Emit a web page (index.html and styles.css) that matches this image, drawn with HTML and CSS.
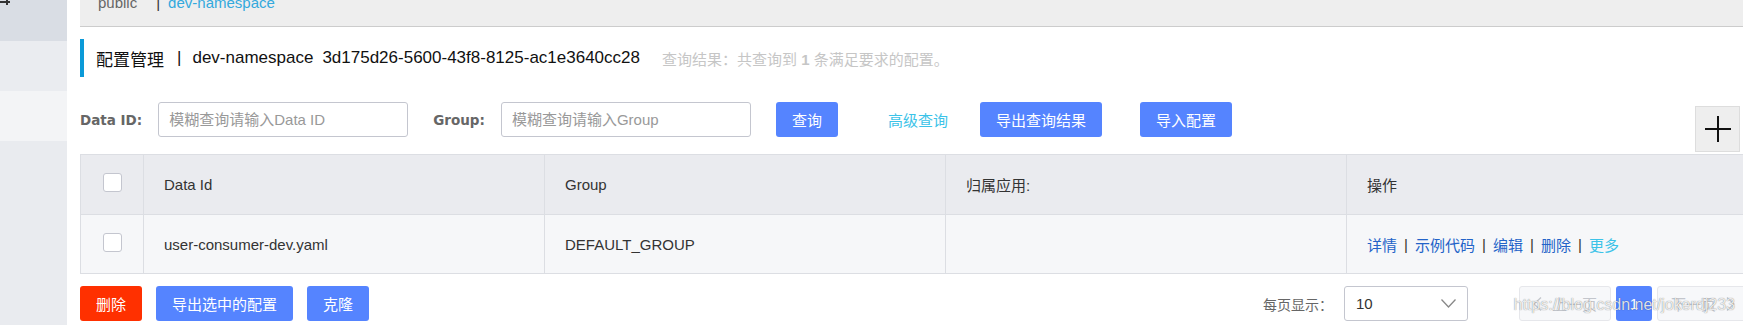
FILE: index.html
```html
<!DOCTYPE html>
<html lang="zh-CN">
<head>
  <meta charset="UTF-8">
  <title>配置管理</title>
  <link rel="stylesheet" href="styles.css">
</head>
<body>
  <!-- 左侧菜单 -->
  <aside class="sidebar">
    <div class="side-top">
      <svg class="side-icon" width="12" height="6" viewBox="0 0 12 6"><path d="M0 2H10M7 0V5" stroke="#333" stroke-width="2" fill="none"/></svg>
    </div>
    <div class="side-item"></div>
    <div class="side-item side-active"></div>
  </aside>

  <main class="main">
    <!-- 命名空间 -->
    <div class="tabs">
      <span class="tab">public</span>
      <span class="tab-sep">|</span>
      <span class="tab tab-active">dev-namespace</span>
    </div>

    <div class="page-title">
      <span>配置管理</span>
      <span class="title-sep">|</span>
      <span>dev-namespace</span>
      <span class="title-id">3d175d26-5600-43f8-8125-ac1e3640cc28</span>
      <span class="title-result">查询结果：共查询到 <b>1</b> 条满足要求的配置。</span>
    </div>

    <!-- 查询条件 -->
    <div class="search-bar">
      <label class="field-label">Data ID:</label>
      <input class="field-input" type="text" placeholder="模糊查询请输入Data ID">
      <label class="field-label field-group">Group:</label>
      <input class="field-input" type="text" placeholder="模糊查询请输入Group">
      <button class="btn btn-query">查询</button>
      <a class="link-advanced">高级查询</a>
      <button class="btn btn-export">导出查询结果</button>
      <button class="btn btn-import">导入配置</button>
      <div class="add-btn">
        <svg width="26" height="26" viewBox="0 0 26 26"><path d="M0 13H26M13 0V26" stroke="#111" stroke-width="2" fill="none"/></svg>
      </div>
    </div>

    <!-- 配置列表 -->
    <div class="config-table">
      <div class="table-row table-head">
        <div class="table-cell check-cell"><span class="checkbox"></span></div>
        <div class="table-cell">Data Id</div>
        <div class="table-cell">Group</div>
        <div class="table-cell">归属应用:</div>
        <div class="table-cell">操作</div>
      </div>
      <div class="table-row table-body">
        <div class="table-cell check-cell"><span class="checkbox"></span></div>
        <div class="table-cell">user-consumer-dev.yaml</div>
        <div class="table-cell">DEFAULT_GROUP</div>
        <div class="table-cell"></div>
        <div class="table-cell actions">
          <a>详情</a><span class="link-sep">|</span><a>示例代码</a><span class="link-sep">|</span><a>编辑</a><span class="link-sep">|</span><a>删除</a><span class="link-sep">|</span><a class="link-more">更多</a>
        </div>
      </div>
    </div>

    <!-- 批量操作与分页 -->
    <div class="footer-bar">
      <button class="btn btn-danger">删除</button>
      <button class="btn">导出选中的配置</button>
      <button class="btn">克隆</button>

      <div class="pager">
        <span class="pager-label">每页显示：</span>
        <div class="page-size">
          <span>10</span>
          <svg width="15" height="9" viewBox="0 0 15 9"><path d="M0.5 0.5L7.5 8L14.5 0.5" stroke="#888" stroke-width="1.3" fill="none"/></svg>
        </div>
        <div class="page-btn page-prev">
          <svg width="9" height="14" viewBox="0 0 9 14"><path d="M8 0.5L1 7L8 13.5" stroke="#c3c6cc" stroke-width="1.3" fill="none"/></svg>
          <span>上一页</span>
        </div>
        <div class="page-num">1</div>
        <div class="page-btn page-next">
          <span>下一页</span>
          <svg width="9" height="14" viewBox="0 0 9 14"><path d="M1 0.5L8 7L1 13.5" stroke="#c3c6cc" stroke-width="1.3" fill="none"/></svg>
        </div>
      </div>
    </div>
  </main>

  <div class="watermark">https://blog.csdn.net/jokerdj233</div>
</body>
</html>
```

FILE: styles.css
```css
/* 全局样式 */
html, body {
  margin: 0;
  padding: 0;
  overflow: hidden;
}
body {
  display: flex;
  height: 325px;
  font-family: "Liberation Sans", "Noto Sans CJK SC", sans-serif;
  font-size: 15px;
  color: #333;
  background-color: #fff;
}

/* 左侧菜单 */
.sidebar {
  width: 67px;
  flex-shrink: 0;
  background-color: #e9ebef;
}
.side-top {
  height: 41px;
  background-color: #d9dde4;
}
.side-icon {
  display: block;
}
.side-item {
  height: 50px;
  background-color: #eaecf0;
}
.side-active {
  background-color: #f3f4f6;
}

/* 主要内容区域 */
.main {
  width: 1669px;
  flex-shrink: 0;
  margin-left: 13px;
}
.tabs {
  display: flex;
  height: 26px;
  padding-left: 18px;
  background-color: #eee;
  border-bottom: 1px solid #ccc;
}
.tabs span {
  margin-top: -7px;
  line-height: 20px;
}
.tab {
  color: #666;
}
.tab-sep {
  margin-left: 19px;
  color: #333;
}
.tab-active {
  margin-left: 8px;
  color: #33a9dd;
}

.page-title {
  display: flex;
  align-items: center;
  height: 38px;
  margin-top: 12px;
  padding-left: 12px;
  border-left: 4px solid #0b9ad8;
  font-size: 17px;
  color: #111;
}
.title-sep {
  margin: 0 11px 0 13px;
}
.title-id {
  margin-left: 9px;
}
.title-result {
  margin-left: 22px;
  font-size: 15px;
  color: #c6c6c6;
}

/* 查询条件 */
.search-bar {
  display: flex;
  align-items: center;
  height: 35px;
  margin-top: 25px;
}
.field-label {
  margin-right: 16px;
  font-family: "DejaVu Sans", sans-serif;
  font-size: 13.5px;
  font-weight: bold;
  color: #666;
}
.field-group {
  margin-left: 25px;
}
.field-input {
  width: 250px;
  height: 35px;
  box-sizing: border-box;
  padding: 0 10px;
  border: 1px solid #c4c6cf;
  border-radius: 3px;
  font: inherit;
  color: #333;
  outline: none;
}
.field-input::placeholder {
  color: #999;
}
.btn {
  height: 35px;
  padding: 0 16px;
  border: 0;
  border-radius: 3px;
  background-color: #5584ff;
  color: #fff;
  font: inherit;
}
.btn-query {
  margin-left: 25px;
}
.link-advanced {
  margin-left: 50px;
  color: #3cc3e8;
}
.btn-export {
  margin-left: 32px;
}
.btn-import {
  margin-left: 38px;
}
.add-btn {
  display: flex;
  align-items: center;
  justify-content: center;
  align-self: flex-start;
  width: 45px;
  height: 46px;
  box-sizing: border-box;
  margin: 4px 9px 0 auto;
  background-color: #eee;
  border: 1px solid #ddd;
}

/* 配置列表 */
.config-table {
  margin-top: 17px;
  border-top: 1px solid #dcdee3;
  border-left: 1px solid #dcdee3;
}
.table-row {
  display: grid;
  grid-template-columns: 63px 401px 401px 401px 1fr;
}
.table-cell {
  display: flex;
  align-items: center;
  padding: 0 20px;
  border-right: 1px solid #dcdee3;
  border-bottom: 1px solid #dcdee3;
}
.table-head .table-cell {
  height: 59px;
  background-color: #eaebef;
}
.table-body .table-cell {
  height: 58px;
  background-color: #f6f7f9;
}
.check-cell {
  justify-content: center;
  padding: 0;
}
.checkbox {
  width: 19px;
  height: 19px;
  box-sizing: border-box;
  margin-top: -4px;
  border: 1px solid #c4c6cf;
  border-radius: 3px;
  background-color: #fff;
}
.actions a {
  color: #2363c8;
}
.actions .link-more {
  color: #3cc3e8;
}
.link-sep {
  width: 18px;
  text-align: center;
  color: #333;
}

/* 批量操作与分页 */
.footer-bar {
  display: flex;
  align-items: center;
  height: 35px;
  margin-top: 12px;
}
.footer-bar .btn + .btn {
  margin-left: 14px;
}
.btn-danger {
  background-color: #ff3000;
}
.pager {
  display: flex;
  align-items: center;
  margin-left: auto;
}
.pager-label {
  margin-right: 11px;
  font-size: 14px;
  color: #666;
}
.page-size {
  display: flex;
  align-items: center;
  justify-content: space-between;
  width: 124px;
  height: 35px;
  box-sizing: border-box;
  padding: 0 11px;
  border: 1px solid #c4c6cf;
  border-radius: 3px;
  color: #333;
}
.page-btn {
  display: flex;
  align-items: center;
  justify-content: center;
  gap: 10px;
  width: 92px;
  height: 35px;
  box-sizing: border-box;
  border: 1px solid #e6e7eb;
  border-radius: 3px;
  background-color: #f7f8fa;
  color: #c3c6cc;
}
.page-prev {
  margin-left: 51px;
}
.page-num {
  width: 36px;
  height: 35px;
  margin: 0 5px;
  line-height: 35px;
  text-align: center;
  border-radius: 3px;
  background-color: #5584ff;
  color: #fff;
}

/* 水印 */
.watermark {
  position: absolute;
  right: 8px;
  bottom: 11px;
  font-size: 16px;
  color: rgba(255, 255, 255, 0.85);
  text-shadow: 0 0 1px rgba(0, 0, 0, 0.55);
}
```
